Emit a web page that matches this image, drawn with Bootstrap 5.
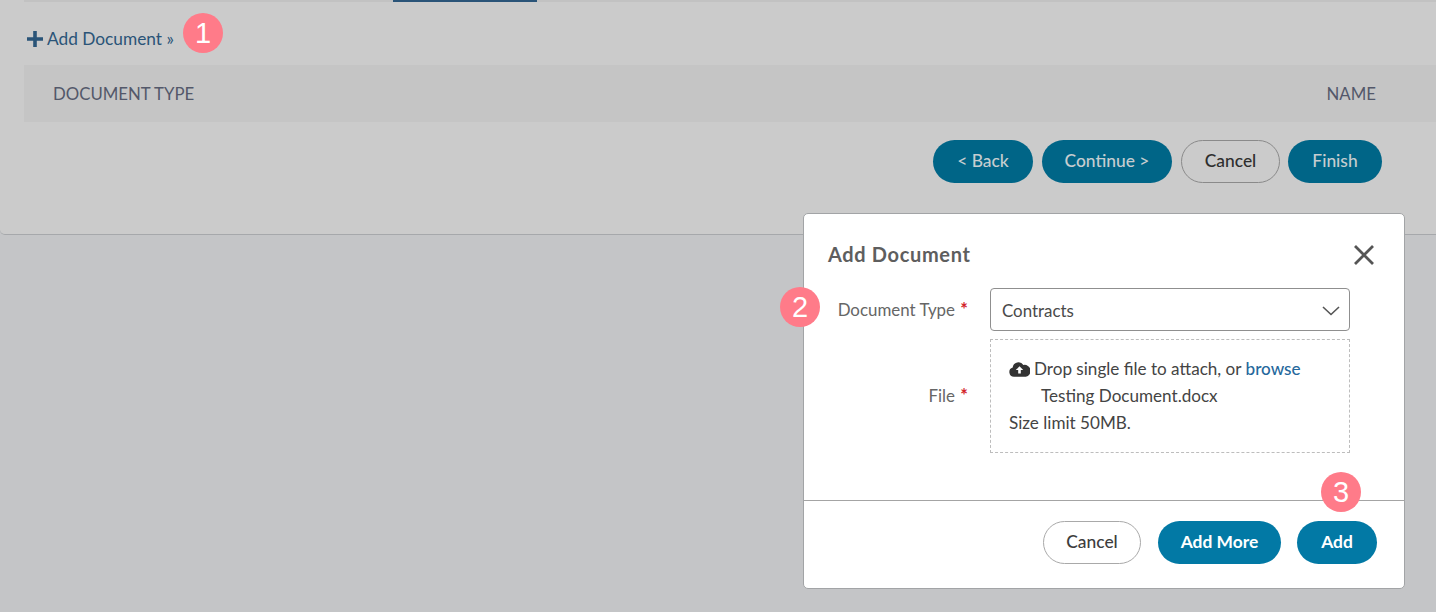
<!DOCTYPE html>
<html lang="en">
<head>
<meta charset="utf-8">
<title>Add Document</title>
<link rel="stylesheet" href="https://cdn.jsdelivr.net/npm/bootstrap@5.3.0/dist/css/bootstrap.min.css">
<style>
html,body{height:612px;overflow:hidden}
body{background:#c4c5c7;font-family:Lato,"Open Sans",sans-serif;font-size:16px;color:#3d3d3d;position:relative}
.sheet{height:235px;background:#cbcbcb;border-bottom:1px solid #a6a8ab;border-bottom-left-radius:5px;padding-left:24px}
.tabline{height:2px;background:#c2c2c2;position:relative}
.tabactive{position:absolute;left:369px;top:0;width:144px;height:2px;background:#2a5478}
.addlink{height:63px;padding:11px 0 0 3px;color:#2a5478;font-size:17.3px;gap:4px}
.addlink svg{display:block}
.thead-band{height:57px;background:#c5c5c5;padding:0 60px 0 29px;color:#53586a;font-size:16.8px}
.wizard-actions{padding:18px 54px 0 0}
.pill{height:43px;border-radius:22px;font-size:17.4px;font-weight:500;padding:0 0 1px;display:inline-flex;align-items:center;justify-content:center;font-family:Lato,sans-serif}
.pill-dim{background:#006587;border:0;color:#c6cdd0}
.pill-dim:hover{background:#006587;color:#c6cdd0}
.pill-ghost{background:transparent;border:1px solid #8a8a8a;color:#2e2e2e}
.pill-main{background:#0279a5;border:0;color:#fff;font-weight:700}
.pill-main:hover{background:#0279a5;color:#fff}
.pill-white{background:#fff;border:1px solid #a9a9a9;color:#3d3d3d;padding-bottom:0}
.w-back{width:100px;margin-right:9px}.w-cont{width:130px;margin-right:9px}.w-can{width:99px;margin-right:8px}.w-fin{width:94px}
.dialog{position:absolute;left:803px;top:213px;width:602px;height:376px;background:#fff;border:1px solid #a2a4a6;border-radius:5px}
.dialog-head{height:74px;padding:5px 29px 0 24px}
.dialog-title{font-size:20px;font-weight:700;color:#5e5e5e;margin:0;letter-spacing:.65px}
.closer{background:none;border:0;padding:0;display:block}
.dialog-body{height:212px}
.lab{width:164px;text-align:right;color:#666;font-size:16.9px;flex:none}
.req{color:#d2232a;font-weight:700;font-size:18px;margin-left:1px}
.row-type{height:44px;margin-bottom:7px}
.row-type .lab{padding-top:8px;align-self:flex-start}
.pickbox{margin-left:22px;width:360px;height:43px;border:1px solid #8f8f8f;border-radius:4px;padding:3px 9px 0 11px;font-size:16.9px;color:#4a4a4a}
.row-file{height:114px}
.file-lab{padding-bottom:2px}
.dropbox{margin-left:22px;width:360px;height:114px;border:1px dashed #bdbdbd;padding:15px 18px;font-size:17.1px;line-height:27px;color:#444}
.dropbox a{color:#25689c;text-decoration:none;font-weight:500}
.indent{padding-left:32px}
.dialog-foot{border-top:1px solid #a4a4a4;height:89px;padding:20px 27px 0 0}
.w-can2{width:98px;margin-right:17px}.w-more{width:123px;margin-right:16px}.w-add{width:80px}
.dot{position:absolute;width:40px;height:40px;border-radius:50%;background:#ff7b89;color:#fff;font-family:"Liberation Sans",Arial,sans-serif;font-size:29px;line-height:40px;text-align:center}
.dot1{left:183px;top:13px}.dot2{left:780px;top:287px}.dot3{left:1321px;top:472px}
</style>
</head>
<body>
<div class="sheet">
  <div class="tabline"><div class="tabactive"></div></div>
  <div class="addlink d-flex align-items-center">
    <svg width="16" height="16" viewBox="0 0 16 16"><path d="M6.2 0h3.6v6.2H16v3.6H9.8V16H6.2V9.8H0V6.2h6.2z" fill="#2a5478"/></svg>
    <span>Add Document »</span>
  </div>
  <div class="thead-band d-flex align-items-center justify-content-between">
    <span>DOCUMENT TYPE</span><span>NAME</span>
  </div>
  <div class="wizard-actions d-flex justify-content-end">
    <button class="btn pill pill-dim w-back">&lt; Back</button>
    <button class="btn pill pill-dim w-cont">Continue &gt;</button>
    <button class="btn pill pill-ghost w-can">Cancel</button>
    <button class="btn pill pill-dim w-fin">Finish</button>
  </div>
</div>

<div class="dialog">
  <div class="dialog-head d-flex align-items-center justify-content-between">
    <h5 class="dialog-title">Add Document</h5>
    <button class="closer" aria-label="Close"><svg width="22" height="22" viewBox="0 0 22 22"><path d="M2 2l18 18M20 2L2 20" stroke="#555" stroke-width="2.8" fill="none"/></svg></button>
  </div>
  <div class="dialog-body">
    <div class="row-type d-flex">
      <div class="lab">Document Type <span class="req">*</span></div>
      <div class="pickbox d-flex align-items-center justify-content-between">
        <span>Contracts</span>
        <svg width="18" height="10" viewBox="0 0 18 10"><path d="M1 1l8 7.5L17 1" stroke="#555" stroke-width="1.6" fill="none"/></svg>
      </div>
    </div>
    <div class="row-file d-flex">
      <div class="lab align-self-center file-lab">File <span class="req">*</span></div>
      <div class="dropbox">
        <div class="d-flex align-items-center gap-1"><svg width="21" height="16" viewBox="0 0 21 16"><path d="M5 15.8a4.7 4.7 0 0 1-1.3-9.2A5.8 5.8 0 0 1 14.4 4 4.3 4.3 0 0 1 16.8 15.8z" fill="#333"/><path d="M10.5 5.2l3.7 3.9h-2.4v3.5H9.2V9.1H6.8z" fill="#fff"/></svg><span>Drop single file to attach, or <a href="#">browse</a></span></div>
        <div class="indent">Testing Document.docx</div>
        <div>Size limit 50MB.</div>
      </div>
    </div>
  </div>
  <div class="dialog-foot d-flex justify-content-end">
    <button class="btn pill pill-white w-can2">Cancel</button>
    <button class="btn pill pill-main w-more">Add More</button>
    <button class="btn pill pill-main w-add">Add</button>
  </div>
</div>

<div class="dot dot1">1</div>
<div class="dot dot2">2</div>
<div class="dot dot3">3</div>
<script src="https://cdn.jsdelivr.net/npm/bootstrap@5.3.0/dist/js/bootstrap.bundle.min.js"></script>
</body>
</html>
